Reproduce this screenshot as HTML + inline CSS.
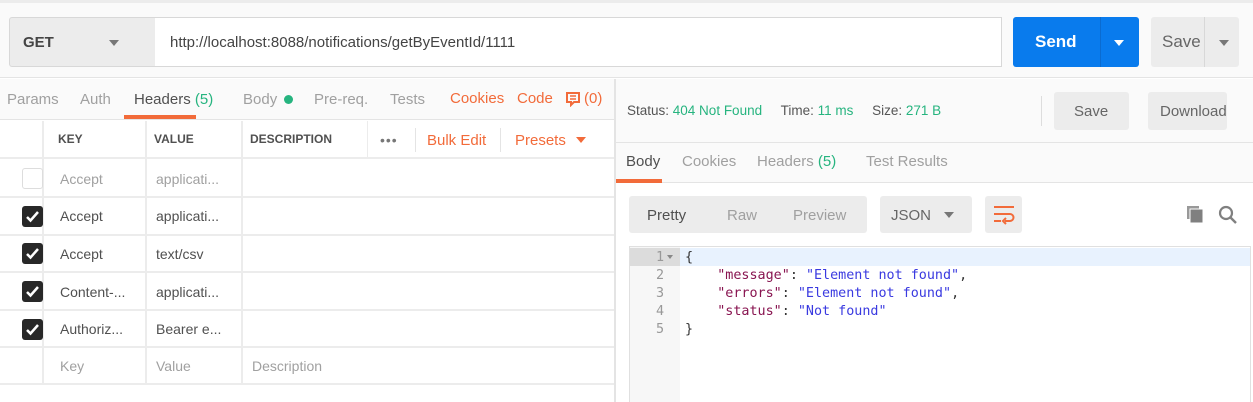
<!DOCTYPE html>
<html><head><style>
*{box-sizing:border-box;margin:0;padding:0}
body{width:1253px;height:402px;overflow:hidden;background:#fff;font-family:"Liberation Sans",sans-serif;font-size:14px;color:#505050;position:relative}
.a{position:absolute}
.t{position:absolute;white-space:nowrap}
.or{color:#f26b3a}.gr{color:#26b47f}.lg{color:#a0a0a0}
.cb{position:absolute;left:22px;width:21px;height:21px;border-radius:3px;background:#282828}
.cb svg{position:absolute;left:3px;top:4px}
.mono{font-family:"DejaVu Sans Mono","Liberation Mono",monospace;font-size:13.4px}
</style></head><body>
<div class="a" style="left:0;top:0;width:1253px;height:78px;background:#fafafa;border-top:3px solid #ececec;border-bottom:1px solid #e4e4e4"></div>
<div class="a" style="left:9px;top:17px;width:147px;height:50px;background:#ececec;border:1px solid #d8d8d8;border-radius:3px 0 0 3px"></div>
<div class="t" style="left:23px;top:34px;font-weight:bold;color:#444;font-size:15px">GET</div>
<div class="a" style="left:109px;top:40px;border:5px solid transparent;border-top:6px solid #777;left:109px"></div>
<div class="a" style="left:155px;top:17px;width:847px;height:50px;background:#fff;border:1px solid #d8d8d8;border-left:none"></div>
<div class="t" style="left:170px;top:34px;font-size:15px;color:#444">http://localhost:8088/notifications/getByEventId/1111</div>
<div class="a" style="left:1013px;top:17px;width:126px;height:50px;background:#097bed;border-radius:3px"></div>
<div class="a" style="left:1100px;top:17px;width:1px;height:50px;background:#0a6bd0"></div>
<div class="t" style="left:1035px;top:32px;font-weight:bold;color:#fff;font-size:17px">Send</div>
<div class="a" style="left:1114px;top:40px;border:5px solid transparent;border-top:6px solid #fff"></div>
<div class="a" style="left:1151px;top:17px;width:88px;height:50px;background:#ececec;border-radius:3px"></div>
<div class="a" style="left:1204px;top:17px;width:1px;height:50px;background:#d8d8d8"></div>
<div class="t" style="left:1162px;top:32px;color:#666;font-size:17px">Save</div>
<div class="a" style="left:1219px;top:40px;border:5px solid transparent;border-top:6px solid #777"></div>

<div class="a" style="left:0;top:79px;width:615px;height:41px;background:#fafafa;border-bottom:1px solid #e4e4e4"></div>
<div class="t lg" style="left:7px;top:91px;font-size:15px">Params</div>
<div class="t lg" style="left:80px;top:91px;font-size:15px">Auth</div>
<div class="t" style="left:134px;top:91px;font-size:15px;color:#505050">Headers <span class="gr">(5)</span></div>
<div class="a" style="left:124px;top:115px;width:72px;height:4px;background:#f26b3a"></div>
<div class="t lg" style="left:243px;top:91px;font-size:15px">Body</div>
<div class="a" style="left:284px;top:95px;width:9px;height:9px;border-radius:50%;background:#26b47f"></div>
<div class="t lg" style="left:314px;top:91px;font-size:15px">Pre-req.</div>
<div class="t lg" style="left:390px;top:91px;font-size:15px">Tests</div>
<div class="t or" style="left:450px;top:90px;font-size:15px">Cookies</div>
<div class="t or" style="left:517px;top:90px;font-size:15px">Code</div>
<svg class="a" style="left:565px;top:91px" width="16" height="16" viewBox="0 0 16 16"><path d="M2 2h12v9H9l-3 3v-3H2z" fill="none" stroke="#f26b3a" stroke-width="2"/><path d="M5 5h6M5 8h6" stroke="#f26b3a" stroke-width="1.5"/></svg>
<div class="t or" style="left:584px;top:90px;font-size:15px">(0)</div>

<div class="a" style="left:0;top:121px;width:615px;height:281px;background:#fff"></div>
<div class="a" style="left:0;top:121px;width:615px;height:38px;border-bottom:2px solid #ececec"></div>
<div class="t" style="left:58px;top:132px;font-size:12px;font-weight:bold;color:#505050">KEY</div>
<div class="t" style="left:154px;top:132px;font-size:12px;font-weight:bold;color:#505050">VALUE</div>
<div class="t" style="left:250px;top:132px;font-size:12px;font-weight:bold;color:#505050">DESCRIPTION</div>
<div class="t" style="left:380px;top:132px;font-size:14px;color:#777;letter-spacing:1px">•••</div>
<div class="a" style="left:415px;top:128px;width:1px;height:24px;background:#e4e4e4"></div>
<div class="t or" style="left:427px;top:132px;font-size:15px">Bulk Edit</div>
<div class="a" style="left:500px;top:128px;width:1px;height:24px;background:#e4e4e4"></div>
<div class="t or" style="left:515px;top:132px;font-size:15px">Presets</div>
<div class="a" style="left:576px;top:137px;border:5px solid transparent;border-top:6px solid #f26b3a"></div>
<div class="a" style="left:42px;top:121px;width:2px;height:263px;background:#ececec"></div>
<div class="a" style="left:145px;top:121px;width:2px;height:263px;background:#ececec"></div>
<div class="a" style="left:241px;top:121px;width:2px;height:263px;background:#ececec"></div>
<div class="a" style="left:367px;top:121px;width:1px;height:38px;background:#ececec"></div>
<div class="a" style="left:0;top:196px;width:615px;height:2px;background:#ececec"></div>
<div class="a" style="left:0;top:234px;width:615px;height:2px;background:#ececec"></div>
<div class="a" style="left:0;top:271px;width:615px;height:2px;background:#ececec"></div>
<div class="a" style="left:0;top:309px;width:615px;height:2px;background:#ececec"></div>
<div class="a" style="left:0;top:346px;width:615px;height:2px;background:#ececec"></div>
<div class="a" style="left:0;top:383px;width:615px;height:2px;background:#ececec"></div>

<div class="a" style="left:22px;top:168px;width:21px;height:21px;border:1px solid #ddd;border-radius:3px;background:#fff"></div>
<div class="t lg" style="left:60px;top:171px">Accept</div><div class="t lg" style="left:156px;top:171px">applicati...</div>

<div class="cb" style="top:206px"><svg width="15" height="13" viewBox="0 0 15 13"><path d="M2 7l3.5 3.5L13 2" fill="none" stroke="#fff" stroke-width="2.5"/></svg></div>
<div class="t" style="left:60px;top:208px">Accept</div><div class="t" style="left:156px;top:208px">applicati...</div>
<div class="cb" style="top:243px"><svg width="15" height="13" viewBox="0 0 15 13"><path d="M2 7l3.5 3.5L13 2" fill="none" stroke="#fff" stroke-width="2.5"/></svg></div>
<div class="t" style="left:60px;top:246px">Accept</div><div class="t" style="left:156px;top:246px">text/csv</div>
<div class="cb" style="top:281px"><svg width="15" height="13" viewBox="0 0 15 13"><path d="M2 7l3.5 3.5L13 2" fill="none" stroke="#fff" stroke-width="2.5"/></svg></div>
<div class="t" style="left:60px;top:284px">Content-...</div><div class="t" style="left:156px;top:284px">applicati...</div>
<div class="cb" style="top:319px"><svg width="15" height="13" viewBox="0 0 15 13"><path d="M2 7l3.5 3.5L13 2" fill="none" stroke="#fff" stroke-width="2.5"/></svg></div>
<div class="t" style="left:60px;top:321px">Authoriz...</div><div class="t" style="left:156px;top:321px">Bearer e...</div>
<div class="t lg" style="left:60px;top:358px">Key</div><div class="t lg" style="left:156px;top:358px">Value</div><div class="t lg" style="left:252px;top:358px">Description</div>

<div class="a" style="left:614px;top:79px;width:2px;height:323px;background:#e4e4e4"></div>

<div class="a" style="left:616px;top:79px;width:637px;height:64px;background:#fafafa;border-bottom:1px solid #e4e4e4"></div>
<div class="t" style="left:627px;top:103px;font-size:13.5px;color:#555">Status: <span class="gr">404 Not Found</span>&nbsp;&nbsp;&nbsp;&nbsp; Time: <span class="gr">11 ms</span>&nbsp;&nbsp;&nbsp;&nbsp; Size: <span class="gr">271 B</span></div>
<div class="a" style="left:1041px;top:96px;width:1px;height:30px;background:#ddd"></div>
<div class="a" style="left:1054px;top:92px;width:75px;height:38px;background:#ececec;border-radius:3px"></div>
<div class="t" style="left:1074px;top:103px;font-size:15px;color:#666">Save</div>
<div class="a" style="left:1148px;top:92px;width:79px;height:38px;background:#ececec;border-radius:3px"></div>
<div class="t" style="left:1160px;top:103px;font-size:15px;color:#666">Download</div>
<div class="a" style="left:616px;top:143px;width:637px;height:40px;background:#fafafa;border-bottom:1px solid #e4e4e4"></div>
<div class="t" style="left:626px;top:153px;font-size:15px;color:#505050">Body</div>
<div class="a" style="left:616px;top:179px;width:46px;height:4px;background:#f26b3a"></div>
<div class="t lg" style="left:682px;top:153px;font-size:15px">Cookies</div>
<div class="t lg" style="left:757px;top:153px;font-size:15px">Headers <span class="gr">(5)</span></div>
<div class="t lg" style="left:866px;top:153px;font-size:15px">Test Results</div>

<div class="a" style="left:629px;top:196px;width:238px;height:37px;background:#ececec;border-radius:3px"></div>
<div class="t" style="left:647px;top:207px;font-size:15px;color:#505050">Pretty</div>
<div class="t lg" style="left:727px;top:207px;font-size:15px">Raw</div>
<div class="t lg" style="left:793px;top:207px;font-size:15px">Preview</div>
<div class="a" style="left:880px;top:196px;width:92px;height:37px;background:#ececec;border-radius:3px"></div>
<div class="t" style="left:891px;top:207px;font-size:15px;color:#666">JSON</div>
<div class="a" style="left:944px;top:212px;border:5px solid transparent;border-top:6px solid #777"></div>
<div class="a" style="left:985px;top:196px;width:37px;height:37px;background:#ececec;border-radius:3px"></div>
<svg class="a" style="left:992px;top:204px" width="24" height="22" viewBox="0 0 24 22"><path d="M2 3h20M2 10h16a3.5 3.5 0 0 1 0 7h-5M2 17h7" fill="none" stroke="#f26b3a" stroke-width="2"/><path d="M14 14l-3 3 3 3" fill="none" stroke="#f26b3a" stroke-width="2"/></svg>
<svg class="a" style="left:1186px;top:205px" width="20" height="20" viewBox="0 0 20 20"><rect x="1" y="1" width="12" height="13" fill="#999"/><rect x="4" y="4" width="13" height="14" fill="#808080" stroke="#fff" stroke-width="1"/></svg>
<svg class="a" style="left:1218px;top:205px" width="20" height="20" viewBox="0 0 20 20"><circle cx="8" cy="8" r="6" fill="none" stroke="#808080" stroke-width="2.2"/><path d="M12.5 12.5l5.5 5.5" stroke="#808080" stroke-width="2.4"/></svg>

<div class="a" style="left:629px;top:246px;width:622px;height:156px;border:1px solid #e0e0e0;border-bottom:none;background:#fff"></div>
<div class="a" style="left:630px;top:247px;width:50px;height:155px;background:#f7f7f7"></div>
<div class="a" style="left:630px;top:248px;width:50px;height:18px;background:#dcdcdc"></div>
<div class="a" style="left:680px;top:248px;width:570px;height:18px;background:#e8f2fe"></div>
<div class="a mono" style="left:630px;top:249px;width:34px;line-height:18px;text-align:right;color:#999">1<br>2<br>3<br>4<br>5</div>
<div class="a" style="left:667px;top:255px;border:3px solid transparent;border-top:4px solid #888"></div>
<div class="a mono" style="left:685px;top:249px;line-height:18px;white-space:pre;color:#333">{
    <span style="color:#881450">"message"</span>: <span style="color:#3a3ae0">"Element not found"</span>,
    <span style="color:#881450">"errors"</span>: <span style="color:#3a3ae0">"Element not found"</span>,
    <span style="color:#881450">"status"</span>: <span style="color:#3a3ae0">"Not found"</span>
}</div>
</body></html>
